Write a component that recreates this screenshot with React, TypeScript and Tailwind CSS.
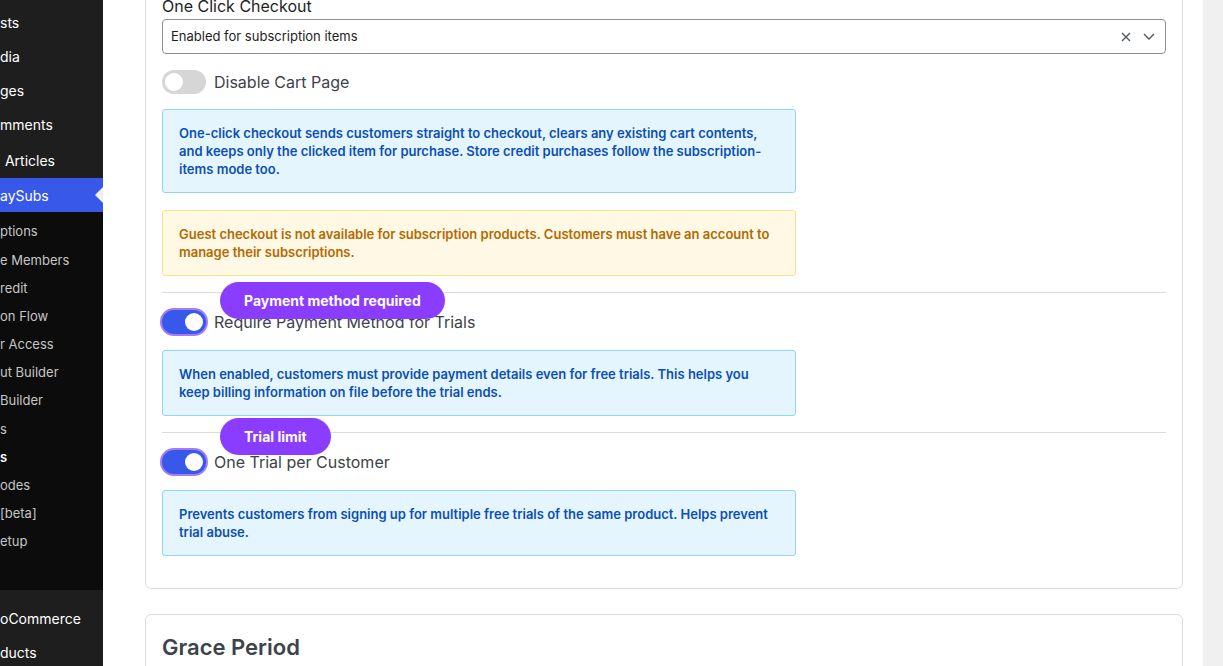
import React from "react";

const font = { fontFamily: "Inter, 'Noto Sans', sans-serif" };

function Toggle({ on }: { on: boolean }) {
  if (on) {
    return (
      <div className="relative w-[44px] h-[24px] rounded-full bg-[#3858e9] ring-2 ring-[#a47cf8] shrink-0">
        <div className="absolute right-[3px] top-[3px] w-[18px] h-[18px] rounded-full bg-white" />
      </div>
    );
  }
  return (
    <div className="relative w-[44px] h-[24px] rounded-full bg-[#d6d6d6] shrink-0">
      <div className="absolute left-[3px] top-[3px] w-[18px] h-[18px] rounded-full bg-white" />
    </div>
  );
}

function Info({ children }: { children: React.ReactNode }) {
  return (
    <div className="w-[634px] rounded-[3px] border border-[#8fd4fd] bg-[#e5f5fe] px-4 py-[14px] text-[13px] leading-[18px] font-semibold text-[#0b50b4]">
      {children}
    </div>
  );
}

export default function App() {
  const top = ["sts", "dia", "ges", "mments"];
  const sub = [
    "ptions",
    "e Members",
    "redit",
    "on Flow",
    "r Access",
    "ut Builder",
    "Builder",
    "s",
  ];
  const sub2 = ["odes", "[beta]", "etup"];
  return (
    <div className="flex w-[1223px] h-[666px] overflow-hidden bg-[#f0f0f1]" style={font}>
      {/* Sidebar */}
      <div className="w-[103px] shrink-0 bg-[#1e1e1e] text-white text-[14px] pt-[6px] overflow-hidden">
        {top.map((t) => (
          <div key={t} className="h-[34px] flex items-center leading-[18px]">
            {t}
          </div>
        ))}
        <div className="h-[36px] flex items-center pl-[1px]">&nbsp;Articles</div>
        <div className="relative h-[34px] flex items-center bg-[#3858e9]">
          aySubs
          <div className="absolute right-0 top-[9px] w-0 h-0 border-y-[8px] border-y-transparent border-r-[8px] border-r-[#f0f0f1]" />
        </div>
        <div className="bg-[#0c0c0c] h-[378px] pt-[6px] text-[13px] text-[#c6c6c6]">
          {sub.map((t, i) => (
            <div key={i} className="h-[28.2px] flex items-center">
              {t}
            </div>
          ))}
          <div className="h-[28.2px] flex items-center font-semibold text-white">s</div>
          {sub2.map((t, i) => (
            <div key={i} className="h-[28.2px] flex items-center">
              {t}
            </div>
          ))}
        </div>
        <div className="h-[11px]" />
        <div className="h-[34px] flex items-center">oCommerce</div>
        <div className="h-[34px] flex items-center">ducts</div>
      </div>

      {/* Main */}
      <div className="w-[1100px] shrink-0 bg-white pl-[42px] pr-[20px]">
        <div className="-mt-[23px] rounded-[6px] border border-[#dcdcde] px-4 pt-4 pb-[32px] flex flex-col">
          <div className="text-[16px] leading-[24px] font-normal text-[#1e1e1e]">One Click Checkout</div>
          <div className="mt-px h-[35px] rounded-[4px] border border-[#8c8f94] flex items-center pl-2 pr-[10px] text-[13px] text-[#1e1e1e]">
            <span className="flex-1 pt-px">Enabled for subscription items</span>
            <svg width="10" height="10" viewBox="0 0 10 10" className="mr-[12px]">
              <path d="M1 1L9 9M9 1L1 9" stroke="#50575e" strokeWidth="1.4" />
            </svg>
            <svg width="12" height="7" viewBox="0 0 12 7">
              <path d="M1 1L6 6L11 1" stroke="#50575e" strokeWidth="1.4" fill="none" />
            </svg>
          </div>
          <div className="mt-[16px] h-[24px] flex items-center gap-2 -mb-[2px]">
            <Toggle on={false} />
            <span className="text-[16px] text-[#3c434a]">Disable Cart Page</span>
          </div>
          <div className="mt-[17px]">
            <Info>
              One-click checkout sends customers straight to checkout, clears any existing cart contents, and keeps only the clicked item for purchase. Store credit purchases follow the subscription-items mode too.
            </Info>
          </div>
          <div className="mt-[17px] w-[634px] rounded-[3px] border border-[#fde08a] bg-[#fef8e5] px-4 py-[14px] text-[13px] leading-[18px] font-semibold text-[#b36a00]">
            Guest checkout is not available for subscription products. Customers must have an account to manage their subscriptions.
          </div>

          <div className="mt-[16px] border-t border-[#dcdcde]" />
          <div className="relative mt-[17px] h-[24px] flex items-center gap-2">
            <Toggle on={true} />
            <span className="text-[16px] text-[#3c434a]">Require Payment Method for Trials</span>
            <div className="absolute left-[58px] -top-[28px] h-[37px] rounded-full bg-[#8b3dff] px-6 flex items-center text-[14px] font-bold text-white whitespace-nowrap">
              Payment method required
            </div>
          </div>
          <div className="mt-[16px]">
            <Info>
              When enabled, customers must provide payment details even for free trials. This helps you keep billing information on file before the trial ends.
            </Info>
          </div>

          <div className="mt-[16px] border-t border-[#dcdcde]" />
          <div className="relative mt-[17px] h-[24px] flex items-center gap-2">
            <Toggle on={true} />
            <span className="text-[16px] text-[#3c434a]">One Trial per Customer</span>
            <div className="absolute left-[58px] -top-[32px] h-[37px] rounded-full bg-[#8b3dff] px-6 flex items-center text-[14px] font-bold text-white whitespace-nowrap">
              Trial limit
            </div>
          </div>
          <div className="mt-[16px]">
            <Info>
              Prevents customers from signing up for multiple free trials of the same product. Helps prevent trial abuse.
            </Info>
          </div>
        </div>

        <div className="mt-[25px] rounded-[6px] border border-[#dcdcde] px-4 pt-[16px] pb-8">
          <div className="text-[22px] leading-[32px] font-semibold text-[#3c434a]">Grace Period</div>
        </div>
      </div>
    </div>
  );
}
